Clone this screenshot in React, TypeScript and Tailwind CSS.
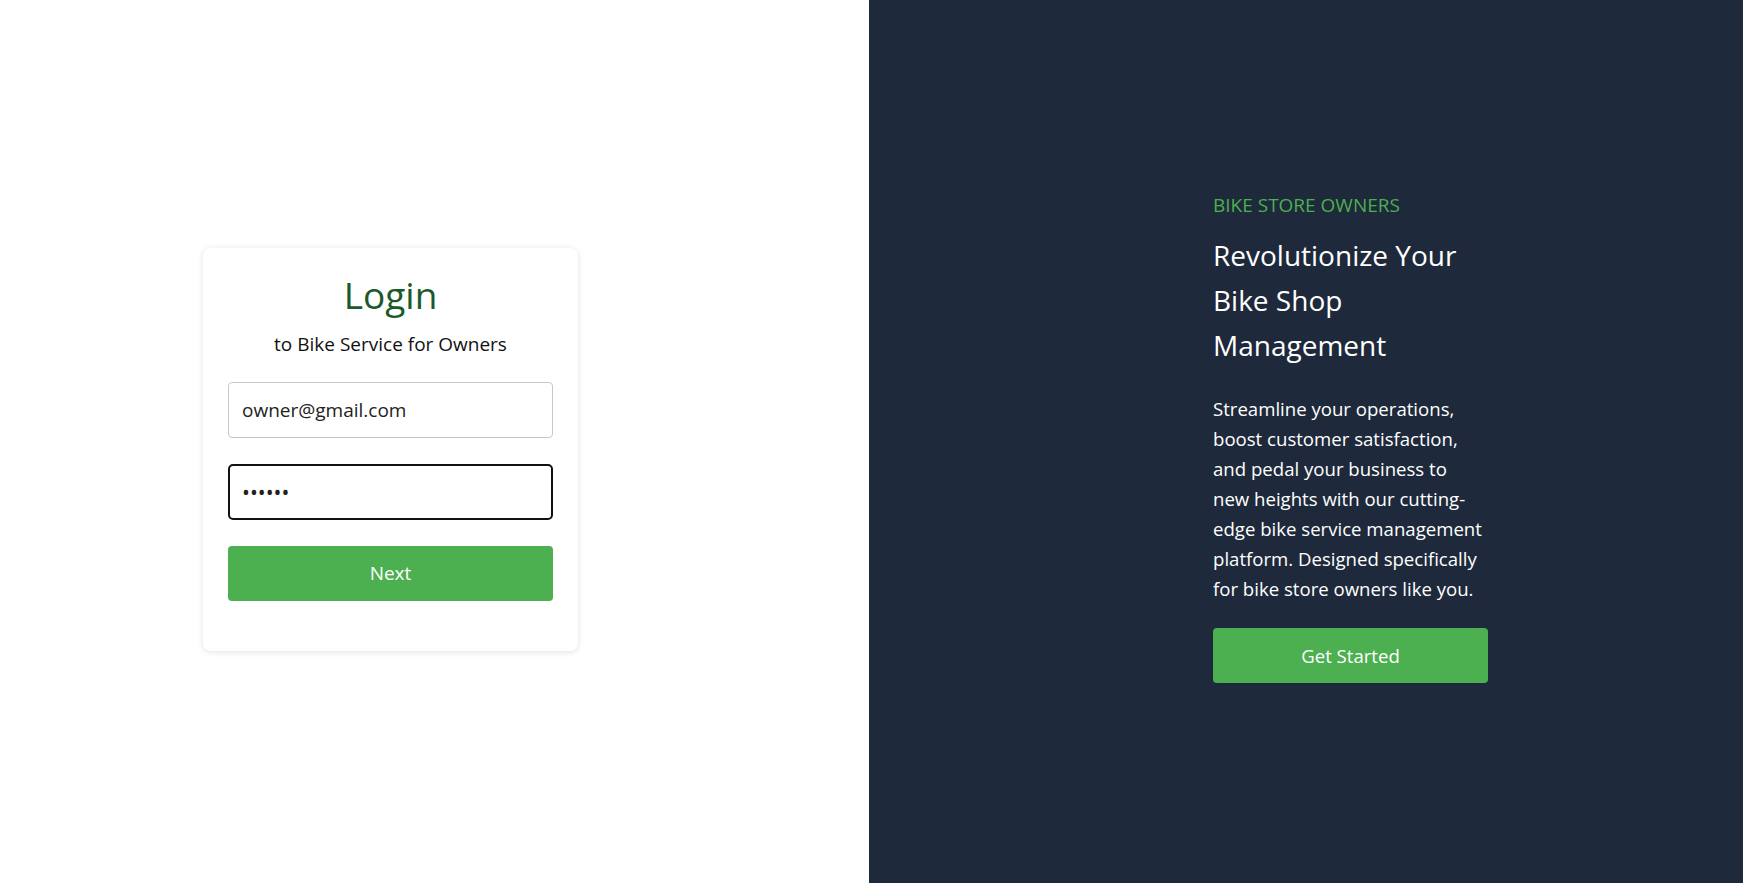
export default function App() {
  return (
    <div
      className="flex h-screen w-full"
      style={{ fontFamily: '"Open Sans", "Noto Sans", sans-serif' }}
    >
      {/* Login side */}
      <div className="flex w-[869px] items-center bg-white pl-[203px] pt-[16px]">
        <div className="w-[375px] rounded-lg bg-white px-[25px] pt-[25px] pb-[50px] shadow-[0_1px_6px_rgba(0,0,0,0.12)]">
          <h1 className="text-center text-[37px] leading-[1.2] text-[#1a5a2a]">Login</h1>
          <p className="mt-[14px] text-center text-[19px] leading-[27px] text-[#111]">
            to Bike Service for Owners
          </p>
          <div className="mt-[24px] flex flex-col gap-[26px]">
            <input
              type="email"
              defaultValue="owner@gmail.com"
              className="h-[56px] w-full rounded-[4px] border border-[#c8c8c8] px-[13px] text-[19px] text-[#222] outline-none"
            />
            <input
              type="password"
              defaultValue="123456"
              className="h-[56px] w-full rounded-[5px] border-2 border-[#111] px-[12px] text-[21px] text-[#222] outline-none"
            />
            <button className="h-[55px] w-full rounded-[4px] bg-[#4caf50] text-[19px] text-white">
              Next
            </button>
          </div>
        </div>
      </div>

      {/* Promo side */}
      <div className="flex flex-1 items-center bg-[#1e293b] pl-[344px] pb-[8px]">
        <div className="w-[275px]">
          <p className="text-[19px] leading-[27px] text-[#4caf50]">BIKE STORE OWNERS</p>
          <h2 className="mt-[14px] whitespace-nowrap text-[28px] leading-[45px] text-white">
            Revolutionize Your
            <br />
            Bike Shop
            <br />
            Management
          </h2>
          <p className="mt-[26px] whitespace-nowrap text-[18.6px] leading-[30px] text-white">
            Streamline your operations,
            <br />
            boost customer satisfaction,
            <br />
            and pedal your business to
            <br />
            new heights with our cutting-
            <br />
            edge bike service management
            <br />
            platform. Designed specifically
            <br />
            for bike store owners like you.
          </p>
          <button className="mt-[24px] h-[55px] w-full rounded-[4px] bg-[#4caf50] text-[18.6px] text-white">
            Get Started
          </button>
        </div>
      </div>
    </div>
  )
}
